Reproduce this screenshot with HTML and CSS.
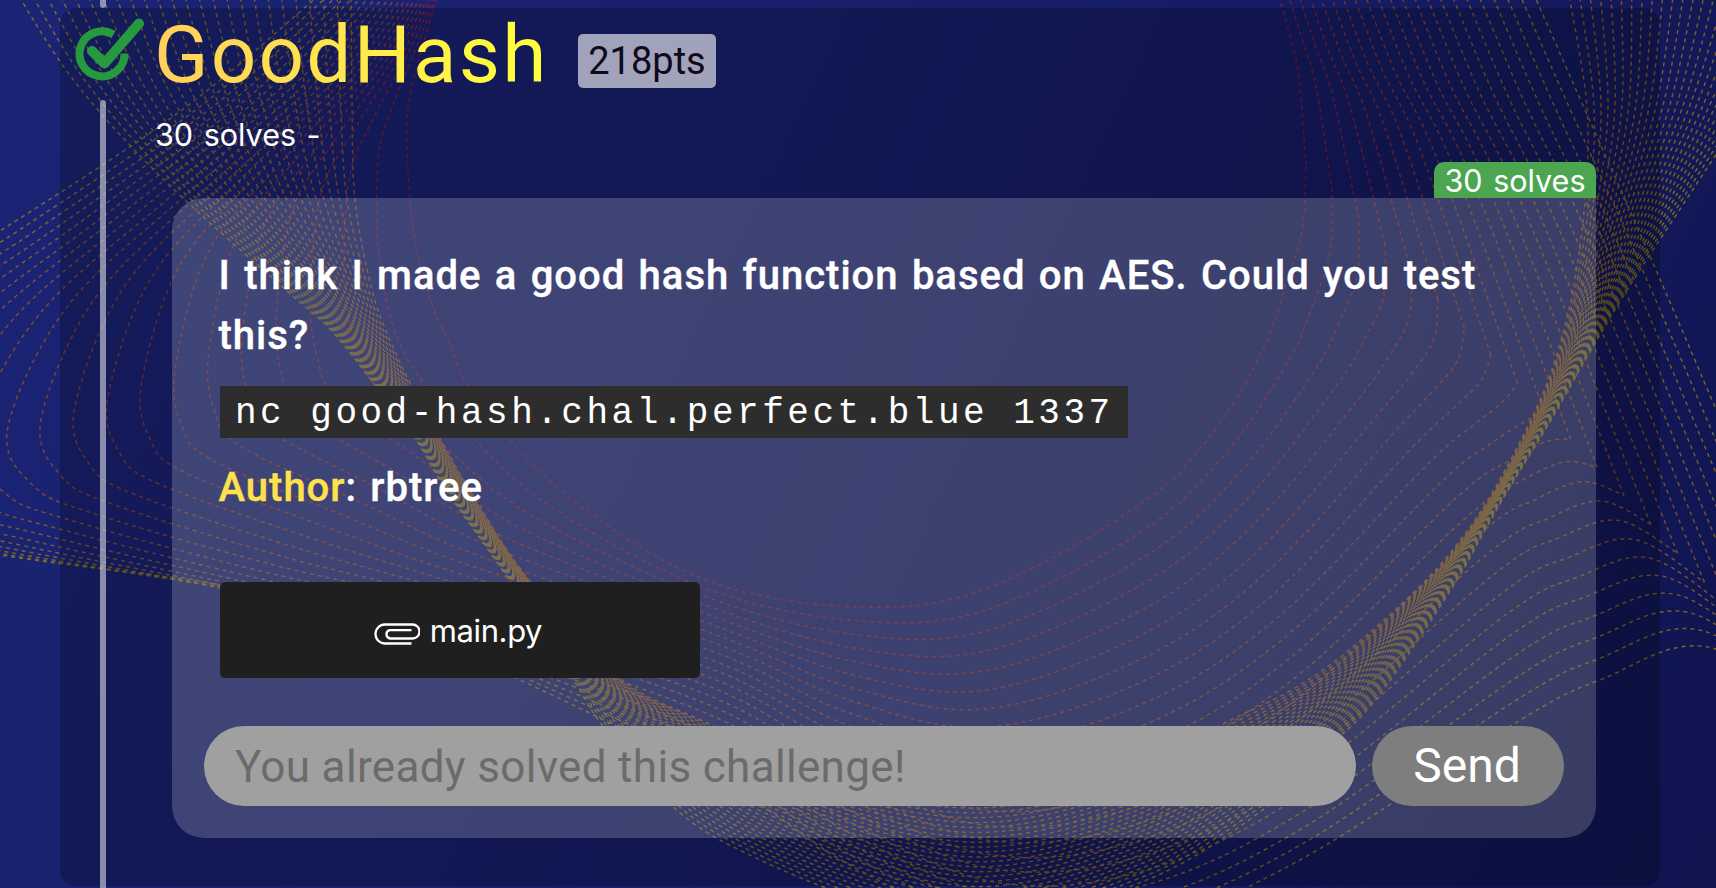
FILE: index.html
```
<!DOCTYPE html>
<html lang="en">
<head>
<meta charset="utf-8">
<title>GoodHash</title>
<link rel="stylesheet" href="styles.css">
</head>
<body>
<svg class="waves" id="waves" viewBox="0 0 1716 888" aria-hidden="true"></svg>
<main class="page">
  <div class="rail rail-prev"></div>
  <section class="challenge">
    <div class="side">
      <svg class="check" viewBox="0 0 72 72" aria-hidden="true">
        <path d="M38.500 19.500A22.500 22.500 0 1 0 49.500 38.500" fill="none" stroke="#279a3f" stroke-width="8"/>
        <path d="M17 36L29.500 48.500L64 8.500" fill="none" stroke="#279a3f" stroke-width="10" stroke-linecap="round" stroke-linejoin="round"/>
      </svg>
      <div class="rail"></div>
    </div>
    <div class="content">
      <header class="head">
        <h1 class="title">GoodHash</h1>
        <span class="points">218pts</span>
      </header>
      <p class="meta">30 solves -</p>
      <div class="tag-row"><span class="tag">30 solves</span></div>
      <article class="card">
        <div class="body">
          <p class="text">I think I made a good hash function based on AES. Could you test this?</p>
          <code class="cmd">nc good-hash.chal.perfect.blue 1337</code>
          <p class="text author"><span class="label">Author</span>: rbtree</p>
          <div class="file">
            <svg class="clip" viewBox="0 0 46 22" aria-hidden="true"><path d="M37.500 20.500H11A9.500 9.500 0 0 1 11 1.500H38.500A6.500 6.500 0 0 1 38.500 15.500H16A4.200 4.200 0 0 1 16 7.200H37.500" fill="none" stroke="#fff" stroke-width="2.300"/></svg>
            <span>main.py</span>
          </div>
        </div>
        <div class="form">
          <div class="field">You already solved this challenge!</div>
          <div class="send">Send</div>
        </div>
      </article>
    </div>
  </section>
</main>
<script src="waves.js"></script>
</body>
</html>
```
FILE: styles.css
```
* { box-sizing: border-box; }
body {
  margin: 0;
  width: 1716px;
  height: 888px;
  overflow: hidden;
  position: relative;
  background: linear-gradient(115deg, #1b2475 0%, #192170 25%, #161d66 55%, #0f144f 100%);
  color: #fff;
  font-family: Roboto, "Liberation Sans", sans-serif;
}
p, h1 { margin: 0; }
.waves { position: absolute; inset: 0; width: 1716px; height: 888px; opacity: .62; }
.waves path { fill: none; stroke-width: 1.45; stroke-dasharray: 4 4; }
.page { position: relative; display: flex; flex-direction: column; padding: 0 56px 0 60px; }
.rail { width: 6px; margin-left: 40px; background: rgba(255, 255, 255, .5); border-radius: 3px; flex: 1; }
.rail-prev { height: 8px; flex: none; border-radius: 0 0 3px 3px; }
.challenge { display: flex; height: 878px; border-radius: 16px; background: rgba(0, 0, 0, .22); }
.side { width: 97px; height: 884px; display: flex; flex-direction: column; flex: none; }
.check { width: 72px; height: 72px; margin: 7px 0 13px 15px; flex: none; }
.content { width: 1439px; flex: none; }
.head { display: flex; align-items: flex-start; height: 92px; }
.title {
  width: 424px;
  margin-left: -3px;
  padding-top: 1px;
  font-size: 80px;
  line-height: 92px;
  font-weight: 400;
  letter-spacing: 2.2px;
  background: linear-gradient(90deg, #ffd05c, #ffff3c 385px);
  background-clip: text;
  -webkit-background-clip: text;
  color: transparent;
}
.points {
  width: 138px;
  height: 54px;
  margin-top: 26px;
  border-radius: 5px;
  background: rgba(255, 255, 255, .6);
  color: #120818;
  font-size: 38px;
  line-height: 54px;
  text-align: center;
}
.meta { height: 62px; margin-left: -2px; padding-top: 15px; font: 30.5px/40px Inter, sans-serif; word-spacing: 2px; }
.tag-row { display: flex; justify-content: flex-end; height: 36px; }
.tag { width: 162px; border-radius: 10px 10px 0 0; background: #4ba551; font: 30.5px/38px Inter, sans-serif; word-spacing: 2px; text-align: center; white-space: nowrap; }
.card { width: 1424px; height: 640px; margin-left: 15px; padding: 0 32px; border-radius: 32px 0 32px 32px; background: rgba(255, 255, 255, .19); }
.body { height: 528px; padding: 48px 16px 0; }
.text {
  width: 1300px;
  margin-left: -1.5px;
  font-size: 40px;
  line-height: 60px;
  font-weight: 500;
  letter-spacing: 1px;
  word-spacing: 2.4px;
  -webkit-text-stroke: .4px;
}
.cmd {
  display: block;
  width: 908px;
  height: 52px;
  margin-top: 20px;
  padding: 2px 0 0 15px;
  background: #2d2d2d;
  font: 36px/52px "Liberation Mono", monospace;
  letter-spacing: 3.5px;
  white-space: nowrap;
}
.author { margin-top: 20px; }
.label { color: #ffe14d; }
.file {
  display: flex;
  align-items: center;
  justify-content: center;
  gap: 10px;
  width: 480px;
  height: 96px;
  margin-top: 64px;
  padding: 2px 4px 0 0;
  border-radius: 5px;
  background: #1f1f1f;
  font: 31px/40px Inter, sans-serif;
  letter-spacing: -.4px;
}
.clip { width: 46px; height: 22px; margin-top: 6px; }
.form { display: flex; gap: 16px; }
.field, .send { height: 80px; line-height: 82px; border-radius: 40px; }
.field { width: 1152px; padding-left: 31px; background: #a0a0a0; color: #6b6b6b; font-size: 44px; letter-spacing: .33px; }
.send { width: 192px; padding-right: 2px; background: #7e7e7e; font-size: 48px; text-align: center; line-height: 80px; }
```
FILE: waves.js
```
// Two families of dashed contour lines, blended from red/orange to yellow.
const loops = [
  [[440,-10],[405,-10],[325,-10]], [[424,41],[328,83],[182,110]], [[410,96],[215,186],[0,231]],
  [[407,137],[110,292],[-180,340]], [[412,220],[58,413],[-290,440]], [[427,290],[75,470],[-180,520]],
  [[450,345],[125,500],[0,555]], [[475,395],[292,553],[219,585]], [[560,490],[438,592],[400,628]],
  [[703,579],[705,671],[703,770]], [[860,607],[850,745],[850,865]], [[988,588],[990,787],[1000,930]],
  [[1144,502],[1144,756],[1144,925]], [[1217,427],[1290,670],[1300,860]], [[1264,347],[1461,508],[1512,725]],
  [[1284,290],[1515,471],[1600,680]], [[1302,230],[1555,452],[1716,649]], [[1306,165],[1584,453],[1866,760]]
];
const legs = [
  [[1306,165],[1584,453],[1866,760]], [[1299,77],[1480,183],[1666,293]],
  [[1290,36],[1430,82],[1585,110]], [[1279,-3],[1393,-10],[1532,-10]]
];
const ribbonInner = [[351,-10],[352,100],[355,200],[372,290],[390,340],[412,387],[441,440],[474,497],[529,580],[619,678],[711,725],[820,782],[975,808],[1120,780],[1221,725],[1290,691],[1348,651],[1418,588],[1458,543],[1494,490],[1534,413],[1556,357],[1573,290],[1585,200],[1587,107],[1569,-5]];
const ribbonOuter = [[15,-10],[75,82],[164,180],[286,290],[328,327],[365,372],[416,440],[446,490],[509,580],[572,678],[615,740],[720,840],[960,925],[1144,881],[1268,806],[1325,750],[1377,698],[1452,588],[1485,530],[1510,487],[1548,425],[1594,345],[1627,290],[1688,197],[1755,95],[1820,-10]];

const quad = (a, b, c, t) => [0, 1].map(k =>
  a[k] * (2 * t - 1) * (t - 1) + b[k] * 4 * t * (1 - t) + c[k] * t * (2 * t - 1));
const mix = (a, b, t) => [0, 1].map(k => a[k] + (b[k] - a[k]) * t);

function spline(pts) {
  let d = `M${pts[0]}`;
  for (let i = 0; i < pts.length - 1; i++) {
    const a = pts[i - 1] || pts[i], b = pts[i], c = pts[i + 1], e = pts[i + 2] || c;
    d += `C${b[0] + (c[0] - a[0]) / 6},${b[1] + (c[1] - a[1]) / 6} ${c[0] - (e[0] - b[0]) / 6},${c[1] - (e[1] - b[1]) / 6} ${c}`;
  }
  return d;
}
const svg = document.getElementById('waves');
function line(d, hue) {
  const p = document.createElementNS('http://www.w3.org/2000/svg', 'path');
  p.setAttribute('d', d);
  p.setAttribute('stroke', hue);
  svg.appendChild(p);
}
for (let i = 0; i < 22; i++) {
  const t = i / 21;
  const color = `rgb(${190 - 10 * t},${15 + 140 * t},${30 - 30 * t})`;
  line(spline(loops.map(p => quad(...p, t))), color);
  line(spline(legs.map(p => quad(...p, t))), color);
}
for (let i = 0; i < 25; i++) {
  const t = i / 24;
  line(spline(ribbonInner.map((p, k) => mix(p, ribbonOuter[k], t))), `rgb(${200 - 20 * t},${115 + 42 * t},0)`);
}
```
